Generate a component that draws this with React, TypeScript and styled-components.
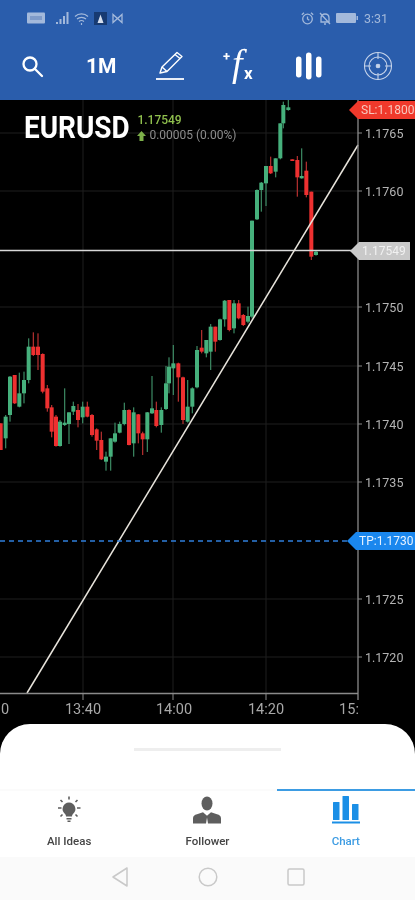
import React from "react"
import styled, { createGlobalStyle } from "styled-components"

const GlobalStyle = createGlobalStyle`
  html, body {
    margin: 0;
    padding: 0;
    background: #000;
  }
  body {
    font-family: Roboto, "Liberation Sans", sans-serif;
  }
`

const Page = styled.div`
  width: 415px;
  height: 900px;
  display: flex;
  flex-direction: column;
  overflow: hidden;
  background: #000;
  filter: blur(0.6px);
`

const Header = styled.header`
  height: 100px;
  flex: none;
  display: flex;
  flex-direction: column;
  background: #2a5dac;
`

const StatusBar = styled.div`
  height: 36px;
  display: flex;
  align-items: center;
  justify-content: space-between;
  padding: 0 27px 0 27px;
  color: #a3b9db;
`

const StatusGroup = styled.div`
  display: flex;
  align-items: center;
  gap: 5px;
`

const Clock = styled.span`
  font-size: 12.5px;
  margin-left: 1px;
`

const Toolbar = styled.div`
  flex: 1;
  display: grid;
  grid-template-columns: repeat(6, 69.2px);
  align-items: center;
  justify-items: center;
  margin-left: -2.6px;
  padding: 0 0 4px 0;
  color: #fff;
`

const Interval = styled.span`
  font-size: 21px;
  font-weight: 700;
`

const ChartArea = styled.main`
  position: relative;
  height: 624px;
  flex: none;
  overflow: hidden;
  background: #000;
`

const ChartSvg = styled.svg`
  display: block;
  width: 415px;
  height: 624px;
`

const Symbol = styled.div`
  position: absolute;
  top: 10px;
  left: 24px;
  display: flex;
  align-items: center;
  gap: 8px;
`

const SymbolName = styled.span`
  font-size: 31px;
  line-height: 36px;
  font-weight: 700;
  color: #fff;
  transform: scaleX(0.9);
  transform-origin: left center;
  margin-right: -12px;
`

const Quote = styled.div`
  display: flex;
  flex-direction: column;
  font-size: 12px;
  line-height: 15px;
`

const QuotePrice = styled.span`
  color: #8fbf4d;
  font-weight: 500;
`

const QuoteChange = styled.span`
  color: #8c8c8c;
  display: flex;
  align-items: center;
  gap: 3px;
`

const PriceTag = styled.div<{ $top: number; $left: number; $width: number; $bg: string; $fg: string }>`
  position: absolute;
  top: ${(p) => p.$top}px;
  left: ${(p) => p.$left}px;
  width: ${(p) => p.$width}px;
  height: 18px;
  box-sizing: border-box;
  padding-left: 12px;
  display: flex;
  align-items: center;
  font-size: 12px;
  white-space: nowrap;
  overflow: hidden;
  color: ${(p) => p.$fg};
  background: ${(p) => p.$bg};
  clip-path: polygon(0 50%, 9px 0, 100% 0, 100% 100%, 9px 100%);
`

const SheetBackdrop = styled.div`
  flex: 1;
  background: #000;
`

const Sheet = styled.section`
  height: 176px;
  display: flex;
  flex-direction: column;
  background: #fff;
  border-radius: 30px 30px 0 0;
`

const Handle = styled.div`
  width: 147px;
  height: 3px;
  flex: none;
  margin: 24px auto 38px;
  background: #eeeeee;
`

const Tabs = styled.nav`
  display: grid;
  grid-template-columns: repeat(3, 1fr);
  height: 68px;
  flex: none;
`

const Tab = styled.div<{ $active?: boolean }>`
  display: flex;
  flex-direction: column;
  align-items: center;
  border-top: 2px solid ${(p) => (p.$active ? "#3d9ce3" : "#fbfbfb")};
  padding-top: 4px;
  color: ${(p) => (p.$active ? "#3d9ce3" : "#454545")};
  font-size: 11.5px;
  font-weight: 500;
`

const TabIcon = styled.div`
  height: 32px;
  margin-bottom: 7px;
`

const NavBar = styled.div`
  flex: 1;
  display: grid;
  grid-template-columns: 88px 88px 88px;
  justify-content: center;
  align-items: center;
  justify-items: center;
  background: #fafafa;
  padding-bottom: 3px;
`

// candle: x, wick top, body top, body bottom, wick bottom, rising
type Candle = [number, number, number, number, number, boolean]

// read off the picture at 3x, offset (0,300)
const leftCandles: Candle[] = [
  [2, 370, 370, 450, 450, false], [17, 345, 350, 415, 445, true], [30, 228, 230, 345, 365, true],
  [44, 225, 225, 310, 312, false], [58, 218, 280, 320, 322, true], [72, 215, 240, 280, 310, true],
  [86, 115, 140, 240, 250, true], [100, 97, 140, 165, 168, false], [114, 100, 140, 165, 210, false],
  [128, 160, 162, 275, 280, false], [142, 255, 265, 325, 335, false], [155, 315, 322, 395, 412, false],
  [168, 345, 350, 438, 440, false], [180, 360, 365, 438, 440, true], [194, 265, 368, 375, 378, true],
  [207, 337, 337, 372, 432, true], [220, 305, 318, 335, 345, true], [234, 312, 330, 360, 382, false],
  [248, 305, 320, 352, 370, true], [262, 305, 320, 350, 352, false], [276, 342, 345, 405, 410, false],
  [290, 385, 388, 422, 450, false], [304, 395, 420, 478, 480, false], [318, 455, 470, 485, 512, true],
  [332, 415, 415, 470, 512, true], [345, 368, 400, 425, 428, true], [359, 365, 372, 398, 400, true],
  [373, 308, 330, 372, 376, true], [387, 328, 330, 435, 436, false], [401, 322, 337, 430, 470, true],
  [415, 342, 343, 400, 430, false], [428, 395, 400, 418, 465, false], [442, 336, 337, 418, 456, true],
  [456, 228, 325, 340, 342, true], [469, 305, 330, 378, 382, false], [484, 322, 330, 375, 398, true],
  [498, 198, 250, 327, 330, true], [507, 172, 200, 250, 280, true], [520, 135, 190, 205, 285, true],
  [535, 188, 190, 232, 305, false], [549, 230, 232, 360, 372, false], [563, 240, 320, 365, 368, true],
  [577, 262, 265, 320, 340, true], [591, 138, 150, 262, 265, true], [605, 90, 143, 155, 160, false],
  [619, 120, 120, 160, 172, true], [632, 72, 80, 155, 210, true], [646, 80, 80, 125, 155, false],
  [660, 56, 58, 120, 122, true], [674, 0, 2, 58, 80, true], [688, 0, 0, 90, 94, false],
  [702, 0, 10, 85, 100, true], [716, 0, 10, 55, 58, false], [730, 42, 45, 75, 78, false],
  [744, 20, 48, 65, 70, true],
]

// read off the picture at 3x, offset (200,100)
const rightCandles: Candle[] = [
  [156, 362, 362, 650, 655, true], [171, 268, 270, 358, 360, true], [184, 246, 248, 270, 335, true],
  [198, 198, 198, 250, 318, true], [212, 170, 198, 220, 222, false], [227, 175, 175, 215, 232, true],
  [241, 70, 70, 175, 178, true], [250, 5, 15, 70, 85, true], [265, 0, 22, 30, 32, true],
  [277, 178, 178, 183, 183, false], [292, 168, 180, 232, 290, false], [305, 145, 228, 235, 236, true],
  [319, 185, 212, 285, 292, false], [334, 275, 275, 470, 480, false], [348, 452, 455, 465, 467, true],
]

const prices: [string, number][] = [
  ["1.1765", 133], ["1.1760", 191], ["1.1750", 307], ["1.1745", 366], ["1.1740", 424],
  ["1.1735", 482], ["1.1725", 599], ["1.1720", 657],
]
const gridYs = [133, 191, 307, 366, 424, 482, 599, 657]
const gridXs = [83, 173, 266]
const times: [string, number][] = [["13:40", 83], ["14:00", 174], ["14:20", 266]]

const Candles = ({ items, ox, oy }: { items: Candle[]; ox: number; oy: number }) => (
  <g>
    {items.map(([x, wt, bt, bb, wb, up]) => {
      const fill = up ? "#46b07c" : "#ee3030"
      const cx = ox + x / 3
      return (
        <g key={x}>
          <rect x={cx - 0.6} y={oy + wt / 3} width={1.2} height={(wb - wt) / 3} fill={up ? "#3c8a64" : "#b83030"} />
          <rect x={cx - 2} y={oy + bt / 3} width={4} height={Math.max((bb - bt) / 3, 1)} fill={fill} />
        </g>
      )
    })}
  </g>
)

const Chart = () => (
  <ChartSvg viewBox="0 100 415 624">
    {gridYs.map((y) => (
      <line key={y} x1={0} x2={358} y1={y} y2={y} stroke="#1f1f1f" />
    ))}
    {gridXs.map((x) => (
      <line key={x} x1={x} x2={x} y1={100} y2={693} stroke="#1f1f1f" />
    ))}
    <Candles items={leftCandles} ox={0} oy={300} />
    <Candles items={rightCandles} ox={200} oy={100} />
    <line x1={0} x2={352} y1={250.5} y2={250.5} stroke="#d8d8d8" strokeWidth={1.4} />
    <line x1={27} y1={693} x2={358} y2={145} stroke="#e8e4dc" strokeWidth={1.5} />
    <line x1={0} x2={350} y1={541} y2={541} stroke="#2f7fdc" strokeWidth={1.4} strokeDasharray="5 4" />
    <line x1={358} x2={358} y1={100} y2={700} stroke="#8a8a8a" strokeWidth={1.3} />
    <line x1={0} x2={358} y1={693.5} y2={693.5} stroke="#8a8a8a" strokeWidth={1.3} />
    {[83, 173, 266].map((x) => (
      <line key={x} x1={x} x2={x} y1={693} y2={700} stroke="#8a8a8a" />
    ))}
    {prices.map(([label, y]) => (
      <g key={label}>
        <line x1={358} x2={362} y1={y} y2={y} stroke="#8a8a8a" />
        <text x={365} y={y + 4.5} fill="#b4b4b4" fontSize={12.5} fontFamily="Roboto, sans-serif">
          {label}
        </text>
      </g>
    ))}
    <g fill="#a8a8a8" fontSize={14.5} fontFamily="Roboto, sans-serif" textAnchor="middle">
      {times.map(([label, x]) => (
        <text key={label} x={x} y={714}>
          {label}
        </text>
      ))}
      <text x={5} y={714}>0</text>
      <text x={349} y={714}>15:</text>
    </g>
  </ChartSvg>
)

const App = () => (
  <Page>
    <GlobalStyle />
    <Header>
      <StatusBar>
        <StatusGroup>
          <svg width="18" height="12" viewBox="0 0 18 12">
            <rect width="18" height="11" y="0.5" rx="1" fill="currentColor" />
            <rect x="3" y="4" width="12" height="4" fill="#7f9bc9" />
          </svg>
          <svg width="14" height="12" viewBox="0 0 14 12" style={{ marginLeft: 5 }}>
            <path d="M1 12h2v-2H1zM4.5 12h2V7h-2zM8 12h2V4H8zM11.5 12h2V0h-2z" fill="currentColor" />
          </svg>
          <svg width="15" height="13" viewBox="0 0 15 13" fill="none" stroke="currentColor" strokeWidth="1.2">
            <path d="M1 4.5c3.5-3.5 9.500-3.500 13 0M3 7c2.500-2.300 6.500-2.300 9 0M5 9.500c1.500-1.200 3.500-1.200 5 0" />
            <path d="M7.500 11v2" />
          </svg>
          <svg width="13" height="13" viewBox="0 0 13 13">
            <rect width="13" height="13" fill="#173a72" />
            <path d="M6.500 2.500 9.500 11h-6z" fill="#d5deee" />
          </svg>
          <svg width="11" height="11" viewBox="0 0 11 11" fill="none" stroke="currentColor" strokeWidth="1.300">
            <path d="M1 1.500v8L10 1.500v8z" />
          </svg>
        </StatusGroup>
        <StatusGroup>
          <svg width="13" height="13" viewBox="0 0 13 13" fill="none" stroke="currentColor" strokeWidth="1.300">
            <circle cx="6.500" cy="7" r="4.800" />
            <path d="M6.500 4.500V7l1.800 1.200M0.800 2.800 3 .8M12.200 2.800 10 .8" />
          </svg>
          <svg width="12" height="13" viewBox="0 0 12 13" fill="none" stroke="currentColor" strokeWidth="1.300">
            <path d="M2 10V6c0-2.500 1.800-4 4-4s4 1.500 4 4v4zM1 1l10 11M5 12h2" />
          </svg>
          <svg width="22" height="10" viewBox="0 0 22 10">
            <rect width="20" height="10" rx="1" fill="currentColor" />
            <rect x="20.500" y="3" width="1.500" height="4" fill="currentColor" />
          </svg>
          <Clock>3:31</Clock>
        </StatusGroup>
      </StatusBar>
      <Toolbar>
        <svg width="24" height="24" viewBox="0 0 24 24" fill="none" stroke="currentColor" strokeWidth="2.300" strokeLinecap="round">
          <circle cx="10" cy="10" r="6.500" />
          <path d="M15 15l7 7" />
        </svg>
        <Interval>1M</Interval>
        <svg width="30" height="30" viewBox="0 0 30 30" fill="none" stroke="currentColor" strokeWidth="1.400" strokeLinejoin="round">
          <path d="M5 22 7 16 22 1.500 27 5.500 12 20.500z" />
          <path d="M7 16l5 4.500M20 3.500l5 4" />
          <path d="M1 28h28" strokeWidth="1.800" />
        </svg>
        <svg width="38" height="38" viewBox="0 0 38 38">
          <text x="11" y="29" fontSize="38" fontStyle="italic" fontFamily="Liberation Serif, serif" fill="#fff">f</text>
          <text x="23" y="32" fontSize="17" fontWeight="700" fontFamily="Roboto, sans-serif" fill="#fff">x</text>
          <text x="2" y="14" fontSize="13" fontWeight="700" fontFamily="Roboto, sans-serif" fill="#fff">+</text>
        </svg>
        <svg width="28" height="28" viewBox="0 0 28 28" fill="currentColor">
          <rect x="1" y="4.500" width="5.500" height="21" rx="2.700" />
          <rect x="11" y="0.500" width="5.500" height="27" rx="2.700" />
          <rect x="21" y="4.500" width="5.500" height="21" rx="2.700" />
        </svg>
        <svg width="30" height="30" viewBox="0 0 30 30" fill="none" stroke="#c5d3ea" strokeWidth="1.100">
          <circle cx="15" cy="15" r="13.500" />
          <circle cx="15" cy="15" r="9" />
          <circle cx="15" cy="15" r="1.800" fill="#c5d3ea" />
          <path d="M15 1v7M15 22v7M1 15h7M22 15h7" />
        </svg>
      </Toolbar>
    </Header>

    <ChartArea>
      <Chart />
      <Symbol>
        <SymbolName>EURUSD</SymbolName>
        <Quote>
          <QuotePrice>1.17549</QuotePrice>
          <QuoteChange>
            <svg width="9" height="10" viewBox="0 0 9 10">
              <path d="M4.500 0 9 5H6.500v5h-4V5H0z" fill="#7db04a" />
            </svg>
            0.00005 (0.00%)
          </QuoteChange>
        </Quote>
      </Symbol>
      <PriceTag $top={1} $left={349} $width={66} $bg="#f0392b" $fg="#f8c9bf">SL:1.1800</PriceTag>
      <PriceTag $top={142} $left={350} $width={60} $bg="#c9c9c9" $fg="#f1f1f1">1.17549</PriceTag>
      <PriceTag $top={432} $left={347} $width={68} $bg="#1a87ee" $fg="#e6f2ff">TP:1.1730</PriceTag>
    </ChartArea>

    <SheetBackdrop>
      <Sheet>
        <Handle />
        <Tabs>
          <Tab>
            <TabIcon>
              <svg width="30" height="30" viewBox="0 0 30 30" fill="#5e5e5e">
                <path d="M15 7.500a6.500 6.500 0 0 0-4 11.500c.7.600 1 1.500 1 2.500h6c0-1 .3-1.900 1-2.500a6.500 6.500 0 0 0-4-11.500zM12.500 23h5v1.500h-5zM13.500 25.500h3V27h-3z" />
                <path d="M15 1.500v3M4 13h3.500M23 13h3.500M6.500 5l2 2M23.500 5l-2 2M6.500 21.500l2-2M23.500 21.500l-2-2" stroke="#5e5e5e" strokeWidth="1.600" fill="none" />
              </svg>
            </TabIcon>
            All Ideas
          </Tab>
          <Tab>
            <TabIcon>
              <svg width="30" height="30" viewBox="0 0 30 30" fill="#5e5e5e">
                <ellipse cx="15" cy="8.500" rx="5.500" ry="7" />
                <path d="M1 28.500v-5c0-2.500 1.500-3.500 4-4.200l6-2 4 3.500 4-3.500 6 2c2.500.7 4 1.700 4 4.200v5H16l-1-6-1 6z" />
              </svg>
            </TabIcon>
            Follower
          </Tab>
          <Tab $active>
            <TabIcon>
              <svg width="30" height="30" viewBox="0 0 30 30" fill="#1b8fe6">
                <rect x="2" y="7" width="6.500" height="18" rx="0.500" />
                <rect x="11.500" y="1" width="6.500" height="24" rx="0.500" />
                <rect x="21" y="9" width="6.500" height="16" rx="0.500" />
                <rect x="1" y="26.500" width="28" height="2" />
              </svg>
            </TabIcon>
            Chart
          </Tab>
        </Tabs>
        <NavBar>
          <svg width="18" height="22" viewBox="0 0 18 22" fill="none" stroke="#c9c9c9" strokeWidth="1.500">
            <path d="M16 2v18L2 11z" strokeLinejoin="round" />
          </svg>
          <svg width="20" height="20" viewBox="0 0 20 20" fill="none" stroke="#c9c9c9" strokeWidth="1.500">
            <circle cx="10" cy="10" r="8.800" />
          </svg>
          <svg width="18" height="18" viewBox="0 0 18 18" fill="none" stroke="#c9c9c9" strokeWidth="1.500">
            <rect x="1" y="1" width="16" height="16" rx="1.500" />
          </svg>
        </NavBar>
      </Sheet>
    </SheetBackdrop>
  </Page>
)

export default App
